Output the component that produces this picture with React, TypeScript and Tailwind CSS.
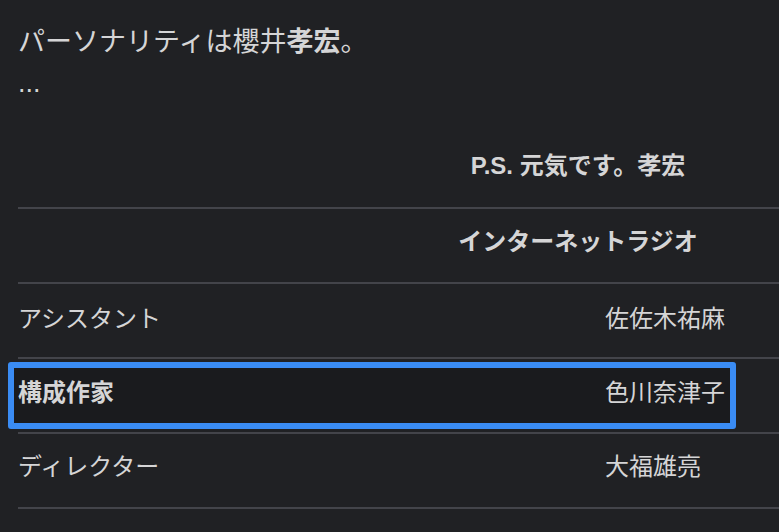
const rows = [
  { label: "アシスタント", name: "佐佐木祐麻", pb: "pb-[3px]" },
  { label: "構成作家", name: "色川奈津子", pb: "pb-[5px]", focused: true },
  { label: "ディレクター", name: "大福雄亮", pb: "pb-[7px]" },
];

export default function App() {
  return (
    <div
      className="w-[779px] h-[532px] overflow-hidden bg-[#202124] text-[#d5d5d6] pl-[18px] pt-[21px]"
      style={{ fontFamily: '"Liberation Sans", "Noto Sans CJK JP", sans-serif' }}
    >
      <p className="text-[27px] leading-[42px]">
        パーソナリティは櫻井<span className="font-bold">孝宏</span>。
      </p>
      <p className="text-[27px] leading-[40px]">...</p>

      {/* table, wider than the window */}
      <div className="w-[1120px] mt-[31px] text-[24px]">
        <div className="h-[75px] flex items-center justify-center border-b-2 border-[#43444a] pb-[10px] font-bold">
          P.S. 元気です。孝宏
        </div>
        <div className="h-[75px] flex items-center justify-center border-b-2 border-[#43444a] pb-[7px] font-bold">
          インターネットラジオ
        </div>
        {rows.map((r) => (
          <div
            key={r.label}
            className={`relative h-[75px] grid grid-cols-[587px_1fr] items-center border-b-2 border-[#43444a] ${r.pb}`}
          >
            {r.focused && (
              <div className="absolute left-[-10px] top-[3px] w-[728px] h-[67px] border-[6px] border-[#3a8cf4] rounded-[3px] bg-[#1a1b1e]" />
            )}
            <span className={`relative ${r.focused ? "font-bold" : ""}`}>{r.label}</span>
            <span className="relative">{r.name}</span>
          </div>
        ))}
      </div>
    </div>
  );
}
